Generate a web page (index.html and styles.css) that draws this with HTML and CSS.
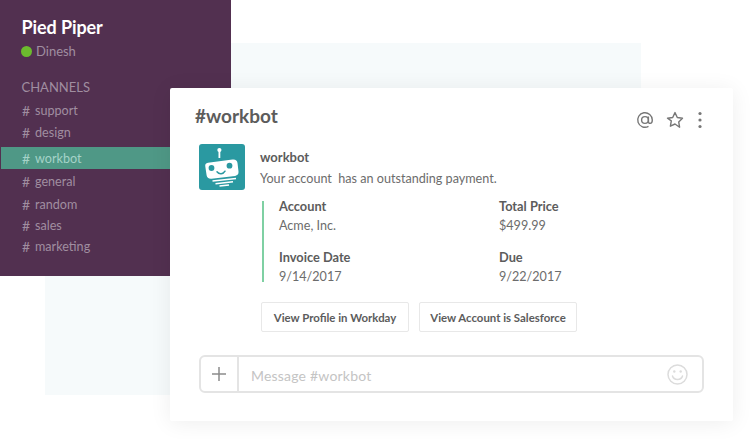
FILE: index.html
```html
<!DOCTYPE html>
<html lang="en">
<head>
<meta charset="utf-8">
<title>Workbot</title>
<link rel="stylesheet" href="styles.css">
</head>
<body>
<div class="stage">
  <div class="backdrop"></div>
  <aside class="sidebar">
    <h1 class="team">Pied Piper</h1>
    <div class="user"><span class="dot"></span>Dinesh</div>
    <div class="section">CHANNELS</div>
    <ul class="channels">
      <li class="chan c-support"><span class="hash">#</span>support</li>
      <li class="chan c-design"><span class="hash">#</span>design</li>
      <li class="chan active"><span class="hash">#</span>workbot</li>
      <li class="chan c-general"><span class="hash">#</span>general</li>
      <li class="chan c-random"><span class="hash">#</span>random</li>
      <li class="chan c-sales"><span class="hash">#</span>sales</li>
      <li class="chan c-marketing"><span class="hash">#</span>marketing</li>
    </ul>
  </aside>
  <main class="card">
    <header class="head">
      <h2 class="title">#workbot</h2>
      <div class="tools">
        <svg class="ico" width="18" height="18" viewBox="0 0 18 18" fill="none" stroke="#777" stroke-width="1.400"><circle cx="9" cy="9" r="3.400"/><path d="M12.400 5.500V10.200c0 1.500 .8 2.200 1.800 2.200S16.300 11 16.300 9A7.300 7.300 0 1 0 12.500 15.400"/></svg>
        <svg class="ico" width="18" height="18" viewBox="0 0 18 18" fill="none" stroke="#777" stroke-width="1.400" stroke-linejoin="round"><path d="M9 1.600l2.300 4.900 5.200.7-3.800 3.700.9 5.300L9 13l-4.600 2.200.9-5.300L1.500 7.200l5.200-.7z"/></svg>
        <svg class="ico dots" width="6" height="18" viewBox="0 0 6 18" fill="#777"><circle cx="3" cy="2.500" r="1.600"/><circle cx="3" cy="9" r="1.600"/><circle cx="3" cy="15.500" r="1.600"/></svg>
      </div>
    </header>
    <section class="msg">
      <div class="avatar">
        <svg width="46" height="46" viewBox="0 0 46 46">
          <rect x="19.500" y="7" width="1.800" height="7" fill="#fff"/>
          <circle cx="20.400" cy="6" r="2.100" fill="#fff"/>
          <path d="M9 18.800 33.500 15.600c3-.4 4.700 1 5 3.500l1 8.500c.3 2.500-1 4-3.400 4.300L12.500 34.800c-2.800.3-4.500-1-4.900-3.500l-1.300-8.800c-.4-2.100.5-3.400 2.700-3.700z" fill="#fff"/>
          <circle cx="12.500" cy="24" r="2.900" fill="#2a99a1"/>
          <circle cx="30.500" cy="21.700" r="2.900" fill="#2a99a1"/>
          <path d="M18 27.800c2.200 2.800 6.200 2.500 8-.6" fill="none" stroke="#2a99a1" stroke-width="1.500" stroke-linecap="round"/>
          <path d="M13.500 37 37 34.400M16.500 39.700 34 37.700M20.500 42 30 40.900" fill="none" stroke="#fff" stroke-width="1.500"/>
        </svg>
      </div>
      <div class="msg-text">
        <div class="sender">workbot</div>
        <p class="line">Your account&nbsp; has an outstanding payment.</p>
      </div>
    </section>
    <section class="attach">
      <dl class="field"><dt>Account</dt><dd>Acme, Inc.</dd></dl>
      <dl class="field"><dt>Total Price</dt><dd>$499.99</dd></dl>
      <dl class="field"><dt>Invoice Date</dt><dd>9/14/2017</dd></dl>
      <dl class="field"><dt>Due</dt><dd>9/22/2017</dd></dl>
    </section>
    <div class="actions">
      <button class="btn btn-a">View Profile in Workday</button>
      <button class="btn btn-b">View Account is Salesforce</button>
    </div>
    <div class="composer">
      <div class="plus">
        <svg width="14" height="14" viewBox="0 0 14 14" stroke="#8c8c8c" stroke-width="1.500"><path d="M7 0v14M0 7h14"/></svg>
      </div>
      <div class="placeholder">Message #workbot</div>
      <svg class="smile" width="21" height="21" viewBox="0 0 21 21" fill="none" stroke="#dcdcdc" stroke-width="1.500"><circle cx="10.500" cy="10.500" r="9.500"/><path d="M5.500 12c1.200 4.500 8.800 4.500 10 0" stroke-linecap="round"/><circle cx="7.300" cy="7.500" r="1.200" fill="#dcdcdc" stroke="none"/><circle cx="13.700" cy="7.500" r="1.200" fill="#dcdcdc" stroke="none"/></svg>
    </div>
  </main>
</div>
</body>
</html>
```
FILE: styles.css
```css
* { box-sizing: border-box; }
html, body { margin: 0; padding: 0; background: #fff; }
body { font-family: Lato, "Open Sans", sans-serif; overflow: hidden; }
.stage { position: relative; width: 750px; height: 439px; overflow: hidden; }
.backdrop { position: absolute; left: 45px; top: 43px; width: 596px; height: 352px; background: #f6fafb; }
.sidebar { position: absolute; left: 0; top: 0; width: 231px; height: 276px; background: #523050; padding: 16px 0 0; color: #a08ea0; }
.team { margin: 0 0 0 21.500px; font-size: 18px; line-height: 22px; font-weight: 700; color: #fff; letter-spacing: -.1px; }
.user { display: flex; align-items: center; margin: 5px 0 0 21px; font-size: 13px; line-height: 17px; }
.dot { width: 11px; height: 11px; border-radius: 50%; background: #6cbb2e; margin-right: 4px; }
.section { margin: 19px 0 0 21.500px; font-size: 13px; line-height: 17px; }
.channels { list-style: none; margin: 3px 0 0 1px; padding: 0; font-size: 12.600px; }
.chan { display: flex; align-items: center; height: 22px; padding-left: 21px; }
.hash { width: 13px; font-size: 14px; }
.active { background: #4f9886; color: #a5d3c8; margin-top: 4px; }
.c-general { margin-top: 1px; }
.c-random { margin-top: 1px; }
.c-sales { margin-top: -1px; }
.c-marketing { margin-top: -1px; }
.card { position: absolute; left: 170px; top: 88px; width: 563px; height: 333px; background: #fff; border-radius: 2px; box-shadow: 0 2px 22px rgba(0,0,0,.07); padding: 15px 25px 0 25px; color: #5c5c5c; }
.head { display: flex; justify-content: space-between; align-items: center; height: 25px; }
.title { margin: 0; font-size: 19px; line-height: 25px; font-weight: 700; color: #5c5c5c; }
.tools { display: flex; align-items: center; gap: 12px; margin: 9px 5px 0 0; }
.ico { display: block; }
.dots { margin-left: 1px; }
.msg { display: flex; margin: 16px 0 0 4px; }
.avatar { width: 46px; height: 46px; border-radius: 3px; background: #2a99a1; }
.msg-text { margin-left: 15px; }
.sender { font-size: 13px; line-height: 17px; font-weight: 700; color: #5c5c5c; margin-top: 5px; }
.line { margin: 4px 0 0; font-size: 12.600px; line-height: 17px; color: #6c6c6c; }
.attach { display: grid; grid-template-columns: 220px 1fr; grid-auto-rows: 36px; row-gap: 15px; height: 81px; margin: 11px 0 0 67px; padding-left: 15px; border-left: 2px solid #7fd0a3; }
.field { margin: -3px 0 0; }
.field dt { font-size: 12.800px; line-height: 17px; font-weight: 700; color: #5c5c5c; }
.field dd { margin: 2px 0 0; font-size: 12.600px; line-height: 17px; color: #6c6c6c; }
.actions { display: flex; gap: 10px; margin: 20px 0 0 66px; }
.btn { height: 30px; padding: 0; background: #fff; border: 1px solid #e8e8e8; border-radius: 2px; font-family: inherit; font-size: 11.400px; font-weight: 700; color: #5c5c5c; text-align: center; }
.btn-a { width: 148px; }
.btn-b { width: 158px; }
.composer { display: flex; align-items: center; width: 505px; height: 38px; margin: 23px 0 0 4px; border: 2.500px solid #e4e4e4; border-radius: 6px; }
.plus { display: flex; align-items: center; justify-content: center; width: 38px; height: 100%; border-right: 2px solid #e4e4e4; }
.placeholder { flex: 1; padding: 2px 0 0 12px; font-size: 14px; letter-spacing: .2px; color: #c4c4c4; }
.smile { margin-right: 14px; }
```
